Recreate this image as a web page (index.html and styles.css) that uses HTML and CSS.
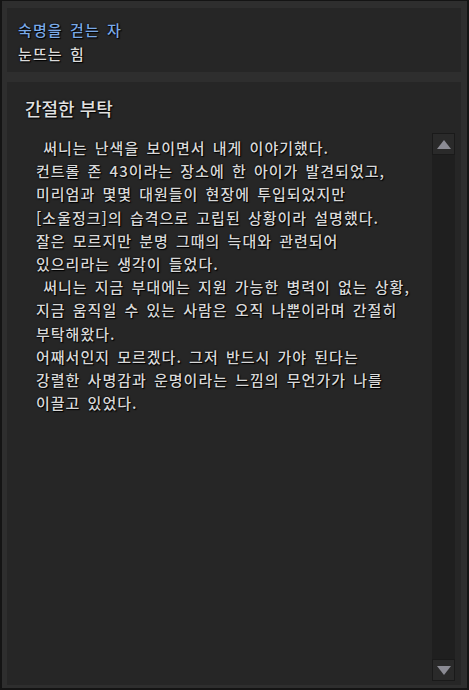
FILE: index.html
```html
<!DOCTYPE html>
<html lang="ko">
<head>
    <meta charset="UTF-8">
    <meta name="viewport" content="width=device-width, initial-scale=1.0">
    <title>간절한 부탁</title>
    <link rel="stylesheet" href="styles.css">
</head>
<body>
    <div class="frame">
        <div class="quest-head">
            <div class="quest-name">숙명을 걷는 자</div>
            <div class="quest-sub">눈뜨는 힘</div>
        </div>

        <div class="quest-main">
            <h2 class="quest-title">간절한 부탁</h2>
            <div class="quest-body">
                <p class="quest-text">
                    &nbsp;써니는 난색을 보이면서 내게 이야기했다.<br>
                    컨트롤 존 43이라는 장소에 한 아이가 발견되었고,<br>
                    미리엄과 몇몇 대원들이 현장에 투입되었지만<br>
                    [소울정크]의 습격으로 고립된 상황이라 설명했다.<br>
                    잘은 모르지만 분명 그때의 늑대와 관련되어<br>
                    있으리라는 생각이 들었다.<br>
                    &nbsp;써니는 지금 부대에는 지원 가능한 병력이 없는 상황,<br>
                    지금 움직일 수 있는 사람은 오직 나뿐이라며 간절히<br>
                    부탁해왔다.<br>
                    어째서인지 모르겠다. 그저 반드시 가야 된다는<br>
                    강렬한 사명감과 운명이라는 느낌의 무언가가 나를<br>
                    이끌고 있었다.
                </p>
                <div class="scrollbar">
                    <div class="scroll-btn"><span class="arrow up"></span></div>
                    <div class="scroll-track"></div>
                    <div class="scroll-btn"><span class="arrow down"></span></div>
                </div>
            </div>
        </div>
    </div>
</body>
</html>
```

FILE: styles.css
```css
/* fenêtre de quête */
html, body {
    margin: 0;
    padding: 0;
    background-color: #111;
}

body {
    font-family: "Noto Sans CJK KR", "Noto Sans", sans-serif;
    font-weight: 500;
    color: #d4d4d4;
}

.frame {
    box-sizing: border-box;
    width: 469px;
    height: 690px;
    border: 2px solid #141414;
    border-top-width: 1px;
    background-color: #2e2e2e;
    padding: 7px 6px 3px 5px;
    display: flex;
    flex-direction: column;
    gap: 10px;
}

.quest-head {
    height: 64px;
    box-sizing: border-box;
    background-color: #262626;
    padding: 10px 11px 0;
    font-size: 15px;
    line-height: 24px;
    letter-spacing: 1.1px;
    word-spacing: 2px;
    text-shadow: 0 0 2px #000, 1px 1px 1px #000;
}

.quest-name {
    color: #7aa9e6;
}

.quest-sub {
    color: #dcdcdc;
}

.quest-main {
    flex: 1;
    background-color: #262626;
    padding: 14px 6px 4px 18px;
    display: flex;
    flex-direction: column;
}

.quest-title {
    margin: 0;
    font-size: 18px;
    line-height: 24px;
    font-weight: 500;
    color: #e0e0e0;
    text-shadow: 0 0 2px #000, 1px 1px 1px #000;
}

.quest-body {
    flex: 1;
    display: flex;
    margin-top: 13px;
}

.quest-text {
    flex: 1;
    margin: 0;
    padding: 3px 0 0 11px;
    font-size: 15px;
    line-height: 23.2px;
    letter-spacing: 1px;
    word-spacing: 2px;
    color: #d8d8d8;
    white-space: nowrap;
    text-shadow: 0 0 2px #000, 1px 1px 1px #000;
}

.scrollbar {
    width: 23px;
    display: flex;
    flex-direction: column;
    background-color: #1f1f1f;
}

.scroll-btn {
    height: 22px;
    box-sizing: border-box;
    border: 1px solid #1a1a1a;
    background-color: #2a2a2a;
    display: flex;
    align-items: center;
    justify-content: center;
}

.scroll-track {
    flex: 1;
}

.arrow {
    width: 0;
    height: 0;
    border-left: 7px solid transparent;
    border-right: 7px solid transparent;
}

.arrow.up {
    border-bottom: 9px solid #8b8b94;
}

.arrow.down {
    border-top: 9px solid #8b8b94;
}
```
